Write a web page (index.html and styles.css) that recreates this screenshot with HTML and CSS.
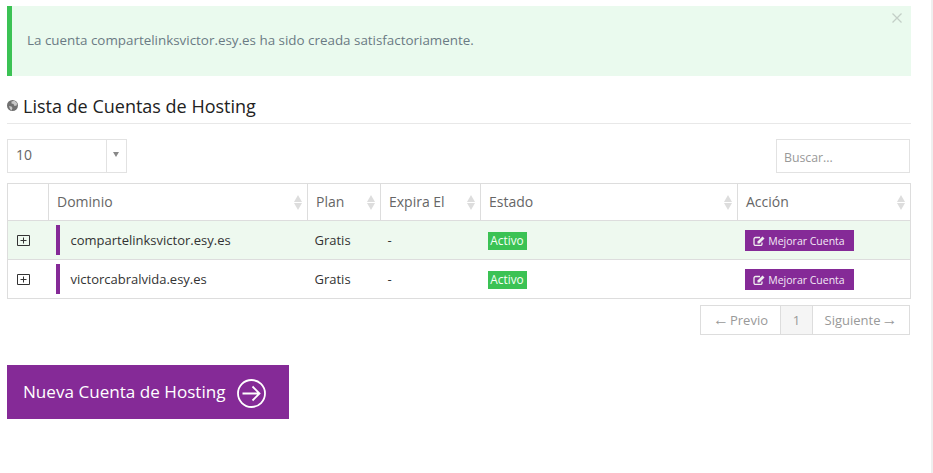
FILE: index.html
```html
<!DOCTYPE html>
<html lang="es">
<head>
<meta charset="utf-8">
<title>Lista de Cuentas de Hosting</title>
<link rel="stylesheet" href="styles.css">
</head>
<body>
<main class="page">
  <div class="alert">
    <p class="alert-text">La cuenta compartelinksvictor.esy.es ha sido creada satisfactoriamente.</p>
    <svg class="alert-close" viewBox="0 0 10 10" width="10" height="10"><path d="M.5.5l9 9M9.5.5l-9 9"/></svg>
  </div>
  <h2 class="title">
    <svg class="globe" viewBox="0 0 11 11" width="11" height="11"><circle cx="5.500" cy="5.500" r="5.500" fill="#707070"/><path d="M4.500 1.500l3-.7 2.500 2.200-.3 2.500-2.200.5-1-2-2-.5zM2 6l2.500.5 1 1.500-1 2.500-1.500-1.500z" fill="#c8c8c8"/></svg>
    Lista de Cuentas de Hosting
  </h2>
  <div class="controls">
    <div class="select"><span class="select-value">10</span><span class="select-arrow"><i class="caret"></i></span></div>
    <div class="search">Buscar...</div>
  </div>
  <table class="table">
    <colgroup><col class="c1"><col class="c2"><col class="c3"><col class="c4"><col class="c5"><col class="c6"></colgroup>
    <thead>
      <tr>
        <th></th>
        <th class="sort">Dominio</th>
        <th class="sort">Plan</th>
        <th class="sort">Expira El</th>
        <th class="sort">Estado</th>
        <th class="sort">Acción</th>
      </tr>
    </thead>
    <tbody>
      <tr class="hl">
        <td class="plus-cell"><svg class="plus" viewBox="0 0 13 11" width="13" height="11"><path d="M.5.500h12v10H.5zM3.500 5.500h6M6.500 2.500v6"/></svg></td>
        <td class="domain-cell"><span class="domain">compartelinksvictor.esy.es</span></td>
        <td>Gratis</td>
        <td>-</td>
        <td><span class="badge">Activo</span></td>
        <td><a class="btn"><svg class="edit" viewBox="0 0 12 10" width="12" height="10"><path d="M9 6.500v1.500a1.500 1.500 0 0 1-1.500 1.500h-5A1.500 1.500 0 0 1 1 8v-5A1.500 1.500 0 0 1 2.500 1.500H7" fill="none" stroke="#eee" stroke-width="1.300"/><path d="M4.500 5.500l5-5 2 2-5 5h-2z" fill="#eee"/></svg>Mejorar Cuenta</a></td>
      </tr>
      <tr>
        <td class="plus-cell"><svg class="plus" viewBox="0 0 13 11" width="13" height="11"><path d="M.5.500h12v10H.5zM3.500 5.500h6M6.500 2.500v6"/></svg></td>
        <td class="domain-cell"><span class="domain">victorcabralvida.esy.es</span></td>
        <td>Gratis</td>
        <td>-</td>
        <td><span class="badge">Activo</span></td>
        <td><a class="btn"><svg class="edit" viewBox="0 0 12 10" width="12" height="10"><path d="M9 6.500v1.500a1.500 1.500 0 0 1-1.500 1.500h-5A1.500 1.500 0 0 1 1 8v-5A1.500 1.500 0 0 1 2.500 1.500H7" fill="none" stroke="#eee" stroke-width="1.300"/><path d="M4.500 5.500l5-5 2 2-5 5h-2z" fill="#eee"/></svg>Mejorar Cuenta</a></td>
      </tr>
    </tbody>
  </table>
  <nav class="pager">
    <a class="pg pg-prev"><span class="arrow arrow-l">←</span>Previo</a><a class="pg pg-cur">1</a><a class="pg pg-next">Siguiente<span class="arrow arrow-r">→</span></a>
  </nav>
  <a class="cta"><span class="cta-text">Nueva Cuenta de Hosting</span>
    <svg class="cta-icon" viewBox="0 0 29 29" width="29" height="29"><circle cx="14.500" cy="14.500" r="13.500"/><path d="M5.500 14.500h17M15.500 7.500l7 7-7 7"/></svg>
  </a>
</main>
<div class="edge"></div>
</body>
</html>
```
FILE: styles.css
```css
* { box-sizing: border-box; }
html, body { margin: 0; height: 473px; overflow: hidden; background: #fff; }
body { display: flex; font-family: "Open Sans", sans-serif; font-size: 13px; color: #333; }
.page { width: 931px; padding: 6px 20px 0 7px; }
.edge { width: 2px; background: #efefef; }

.alert { position: relative; height: 70px; background: #eafaee; border-left: 5px solid #3bc254; display: flex; align-items: center; padding: 0 0 2px 15px; }
.alert-text { margin: 0; font-size: 13.400px; color: #6a7a84; }
.alert-close { position: absolute; top: 7px; right: 9px; }
.alert-close path { stroke: #c3cfc7; stroke-width: 1.300; fill: none; }

.title { margin: 18px 0 0; height: 30px; padding-bottom: 6px; border-bottom: 1px solid #e8e8e8; font-size: 18px; font-weight: 400; line-height: 24px; color: #222; display: flex; align-items: center; gap: 5px; }

.controls { display: flex; justify-content: space-between; padding-right: 1px; margin-top: 15px; }
.select { width: 120px; height: 34px; border: 1px solid #e2e2e2; display: flex; align-items: center; }
.select-value { flex: 1; padding-left: 8px; font-size: 14px; color: #666; line-height: 30px; border-right: 1px solid #e2e2e2; height: 32px; }
.select-arrow { width: 19px; height: 32px; display: flex; justify-content: center; padding: 12px 2px 0 0; }
.caret { width: 0; height: 0; border: 3px solid transparent; border-top: 5px solid #888; border-bottom: 0; }
.search { width: 134px; height: 34px; border: 1px solid #e2e2e2; padding-left: 7px; font-size: 12.300px; line-height: 35px; color: #999; }

.table { width: 904px; margin-top: 10px; border-collapse: collapse; table-layout: fixed; font-size: 13px; }
.c1 { width: 41px; } .c2 { width: 259px; } .c3 { width: 73px; } .c4 { width: 100px; } .c5 { width: 257px; }
.table th { height: 37px; padding: 0 8px 2px; border: 1px solid #ddd; font-size: 14px; font-weight: 400; text-align: left; color: #666; position: relative; }
.table td { height: 39px; padding: 0 7px; border-top: 1px solid #ddd; border-bottom: 1px solid #ddd; color: #333; }
.table td:first-child { border-left: 1px solid #ddd; }
.table td:last-child { border-right: 1px solid #ddd; }
.hl td { background: #eef9ef; }
.sort::before, .sort::after { content: ""; position: absolute; right: 5px; width: 0; height: 0; border-left: 4px solid transparent; border-right: 4px solid transparent; }
.sort::before { top: 11px; border-bottom: 7px solid #ddd; }
.sort::after { top: 19px; border-top: 7px solid #ddd; }
.plus-cell { padding-left: 9px !important; }
.plus { display: block; }
.plus path { fill: none; stroke: #333; stroke-width: 1; }
.domain-cell { padding: 0 !important; }
.domain { display: block; margin-left: 7px; height: 30px; line-height: 30px; border-left: 4px solid #852a97; padding-left: 11px; }
.badge { display: inline-block; width: 39px; height: 18px; line-height: 17px; background: #3bc254; color: #f4fff6; font-size: 11.800px; text-align: center; }
.btn { display: flex; align-items: center; justify-content: center; gap: 3px; width: 109px; height: 21px; padding-top: 1px; background: #852a97; color: #f3e9f6; font-size: 10.500px; }

.pager { display: flex; justify-content: flex-end; padding-right: 1px; margin-top: 6px; }
.pg { height: 30px; line-height: 28px; border: 1px solid #ddd; border-left-width: 0; color: #999; text-align: center; font-size: 13px; }
.arrow { font-family: "Liberation Sans", sans-serif; font-size: 16px; line-height: 1; }
.arrow-l { margin-right: 1px; }
.arrow-r { margin-left: 1px; }
.pg-prev { width: 81px; border-left-width: 1px; }
.pg-cur { width: 32px; background: #f5f5f5; }
.pg-next { width: 97px; }

.cta { display: flex; align-items: center; justify-content: space-between; width: 282px; height: 54px; margin-top: 30px; padding: 2px 23px 0 16px; background: #852a97; color: #fff; font-size: 17.100px; }
.cta-text { margin-top: -3px; }
.cta-icon { display: block; }
.cta-icon circle, .cta-icon path { fill: none; stroke: #fff; stroke-width: 1.800; }
```
